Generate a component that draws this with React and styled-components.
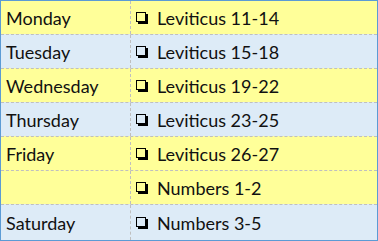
import React from "react";
import styled, { createGlobalStyle } from "styled-components";

const GlobalStyle = createGlobalStyle`
  html, body { margin: 0; padding: 0; background: #ffffff; }
`;

const Table = styled.div`
  width: 378px;
  box-sizing: border-box;
  border: 1px solid #5b9bd5;
  font-family: Lato, "Liberation Sans", sans-serif;
  font-size: 18px;
  color: #111;
`;

const Row = styled.div`
  display: grid;
  grid-template-columns: 130px 1fr;
  height: ${(p) => (p.$last ? 35 : 33)}px;
  background: ${(p) => (p.$tone === "blue" ? "#ddebf7" : "#ffff99")};
  & + & {
    border-top: 1px dashed #bfbfbf;
  }
`;

const Day = styled.div`
  display: flex;
  align-items: center;
  padding-left: 5px;
  border-right: 1px dashed #bfbfbf;
`;

const Reading = styled.div`
  display: flex;
  align-items: center;
  gap: 11px;
  padding-left: 5px;
`;

const Box = styled.span`
  width: 8px;
  height: 8px;
  border: 1px solid #000;
  box-shadow: 2px 2px 0 #000;
  flex: none;
  margin-top: -1px;
`;

const plan = [
  { day: "Monday", text: "Leviticus 11-14", tone: "yellow" },
  { day: "Tuesday", text: "Leviticus 15-18", tone: "blue" },
  { day: "Wednesday", text: "Leviticus 19-22", tone: "yellow" },
  { day: "Thursday", text: "Leviticus 23-25", tone: "blue" },
  { day: "Friday", text: "Leviticus 26-27", tone: "yellow" },
  { day: "", text: "Numbers 1-2", tone: "yellow" },
  { day: "Saturday", text: "Numbers 3-5", tone: "blue" },
];

const App = () => {
  return (
    <>
      <GlobalStyle />
      <Table>
        {plan.map((r, i) => (
          <Row key={i} $tone={r.tone} $last={i === plan.length - 1}>
            <Day>{r.day}</Day>
            <Reading>
              <Box />
              {r.text}
            </Reading>
          </Row>
        ))}
      </Table>
    </>
  );
};

export default App;
